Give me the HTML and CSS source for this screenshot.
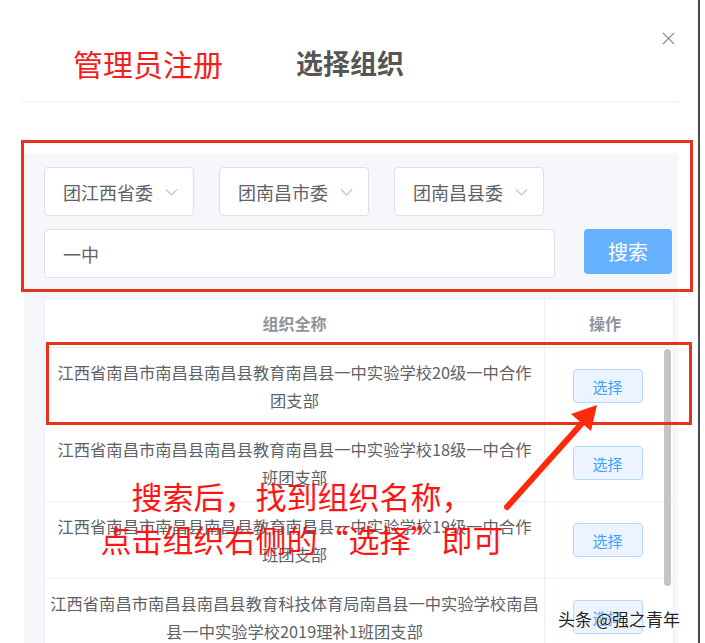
FILE: index.html
```html
<!DOCTYPE html>
<html lang="zh-CN">

<head>
    <meta charset="UTF-8">
    <meta name="viewport" content="width=device-width, initial-scale=1.0">
    <title>选择组织</title>
    <link rel="stylesheet" href="styles.css">
</head>

<body>
    <div class="dialog">
        <div class="dialog-header">
            <span class="tab tab-red">管理员注册</span>
            <span class="tab tab-active">选择组织</span>
        </div>
        <button class="close" type="button">
            <svg width="13" height="13" viewBox="0 0 13 13">
                <path d="M1 1 L12 12 M12 1 L1 12" stroke="#909399" stroke-width="1.3" fill="none" />
            </svg>
        </button>

        <div class="panel">
            <div class="filters">
                <div class="select">团江西省委
                    <svg class="chevron" width="13" height="8" viewBox="0 0 13 8"><path d="M1 1.5 L6.5 7 L12 1.5" /></svg>
                </div>
                <div class="select">团南昌市委
                    <svg class="chevron" width="13" height="8" viewBox="0 0 13 8"><path d="M1 1.5 L6.5 7 L12 1.5" /></svg>
                </div>
                <div class="select">团南昌县委
                    <svg class="chevron" width="13" height="8" viewBox="0 0 13 8"><path d="M1 1.5 L6.5 7 L12 1.5" /></svg>
                </div>
            </div>

            <div class="search-row">
                <div class="input">一中</div>
                <button class="btn-search" type="button">搜索</button>
            </div>

            <div class="table">
                <div class="thead">
                    <div class="th name-col">组织全称</div>
                    <div class="th op-col">操作</div>
                </div>
                <div class="tbody">
                    <div class="tr">
                        <div class="td name-col">江西省南昌市南昌县南昌县教育南昌县一中实验学校20级一中合作<br>团支部</div>
                        <div class="td op-col"><button class="btn-pick" type="button">选择</button></div>
                    </div>
                    <div class="tr">
                        <div class="td name-col">江西省南昌市南昌县南昌县教育南昌县一中实验学校18级一中合作<br>班团支部</div>
                        <div class="td op-col"><button class="btn-pick" type="button">选择</button></div>
                    </div>
                    <div class="tr">
                        <div class="td name-col">江西省南昌市南昌县南昌县教育南昌县一中实验学校19级一中合作<br>班团支部</div>
                        <div class="td op-col"><button class="btn-pick" type="button">选择</button></div>
                    </div>
                    <div class="tr">
                        <div class="td name-col">江西省南昌市南昌县南昌县教育科技体育局南昌县一中实验学校南昌<br>县一中实验学校2019理补1班团支部</div>
                        <div class="td op-col"><button class="btn-pick" type="button">选择</button></div>
                    </div>
                    <div class="scroll-thumb"></div>
                </div>
            </div>
        </div>

        <!-- annotations drawn over the screenshot -->
        <div class="mark mark-search"></div>
        <div class="mark mark-row"></div>
        <svg class="arrow" width="705" height="643" viewBox="0 0 705 643">
            <line x1="507" y1="507" x2="584" y2="421" stroke="#ff2a0c" stroke-width="6" stroke-linecap="round" />
            <polygon points="597,405 591,431 571,414" fill="#ff2a0c" />
        </svg>
        <div class="note">搜索后，找到组织名称，<br>点击组织右侧的“选择”即可</div>
        <div class="watermark">头条 @强之青年</div>
    </div>
</body>

</html>
```

FILE: styles.css
```css
body {
    margin: 0;
    padding: 0;
    background-color: #fff;
    font-family: "Noto Sans CJK SC", "Noto Sans", sans-serif;
    width: 705px;
    height: 643px;
    overflow: hidden;
}

.dialog {
    position: relative;
    width: 698px;
    height: 643px;
    border-right: 2px solid #4a4a4a;
    background-color: #fff;
    overflow: hidden;
}

.dialog-header {
    display: flex;
    align-items: center;
    margin: 0 19px 0 22px;
    padding: 47px 0 22px 51px;
    height: 32px;
    border-bottom: 1px solid #ebeef5;
}

.tab {
    line-height: 32px;
}

.tab-red {
    color: #f51d1d;
    font-size: 30px;
}

.tab-active {
    margin-left: 73px;
    color: #555;
    font-size: 27px;
    font-weight: bold;
}

.close {
    position: absolute;
    left: 662px;
    top: 32px;
    padding: 0;
    border: none;
    background: none;
    line-height: 0;
}

.panel {
    margin: 51px 0 0 24px;
    width: 654px;
    height: 500px;
    padding: 14px 6px 0 20px;
    box-sizing: border-box;
    background-color: #f5f7fa;
}

.filters {
    display: flex;
    gap: 25px;
}

.select {
    display: flex;
    align-items: center;
    justify-content: space-between;
    width: 150px;
    height: 49px;
    padding: 0 15px 0 18px;
    box-sizing: border-box;
    border: 1px solid #dcdfe6;
    border-radius: 4px;
    background-color: #fff;
    color: #606266;
    font-size: 18px;
}

.chevron path {
    fill: none;
    stroke: #c0c4cc;
    stroke-width: 1.2;
}

.search-row {
    display: flex;
    align-items: flex-start;
    margin-top: 13px;
}

.input {
    display: flex;
    align-items: center;
    width: 511px;
    height: 49px;
    padding-left: 18px;
    box-sizing: border-box;
    border: 1px solid #dcdfe6;
    border-radius: 4px;
    background-color: #fff;
    color: #606266;
    font-size: 18px;
}

.btn-search {
    margin-left: 29px;
    width: 88px;
    height: 45px;
    border: none;
    border-radius: 4px;
    background-color: #66b1ff;
    color: #fff;
    font-family: inherit;
    font-size: 20px;
}

.table {
    margin-top: 20px;
    width: 628px;
    border: 1px solid #ebeef5;
    border-bottom: none;
    background-color: #fff;
}

.thead {
    display: grid;
    grid-template-columns: 500px 1fr;
    height: 48px;
    border-bottom: 1px solid #ebeef5;
}

.th {
    display: flex;
    align-items: center;
    justify-content: center;
    color: #909399;
    font-size: 16px;
    font-weight: bold;
}

.name-col {
    border-right: 1px solid #ebeef5;
}

.tbody {
    position: relative;
}

.tr {
    display: grid;
    grid-template-columns: 500px 1fr;
    border-bottom: 1px solid #ebeef5;
}

.td {
    padding: 10px 5px;
    color: #606266;
    font-size: 16.3px;
    line-height: 28px;
    text-align: center;
}

.op-col {
    display: flex;
    align-items: center;
    justify-content: center;
    padding-right: 8px;
}

.btn-pick {
    width: 70px;
    height: 34px;
    border: 1px solid #b3d8ff;
    border-radius: 4px;
    background-color: #ecf5ff;
    color: #409eff;
    font-family: inherit;
    font-size: 15px;
}

.scroll-thumb {
    position: absolute;
    top: 1px;
    right: 2px;
    width: 7px;
    height: 237px;
    border-radius: 4px;
    background-color: #c4c4c4;
}

.mark {
    position: absolute;
    box-sizing: border-box;
    border: 3px solid #e8321e;
}

.mark-search {
    left: 21px;
    top: 140px;
    width: 672px;
    height: 152px;
}

.mark-row {
    left: 46px;
    top: 342px;
    width: 646px;
    height: 83px;
}

.arrow {
    position: absolute;
    left: 0;
    top: 0;
}

.note {
    position: absolute;
    left: 0;
    top: 474px;
    width: 604px;
    color: #ff1414;
    font-size: 31px;
    line-height: 43px;
    text-align: center;
}

.watermark {
    position: absolute;
    left: 558px;
    top: 606px;
    color: #222;
    font-size: 17px;
    text-shadow: 0 0 2px #fff, 0 0 2px #fff;
}
```
